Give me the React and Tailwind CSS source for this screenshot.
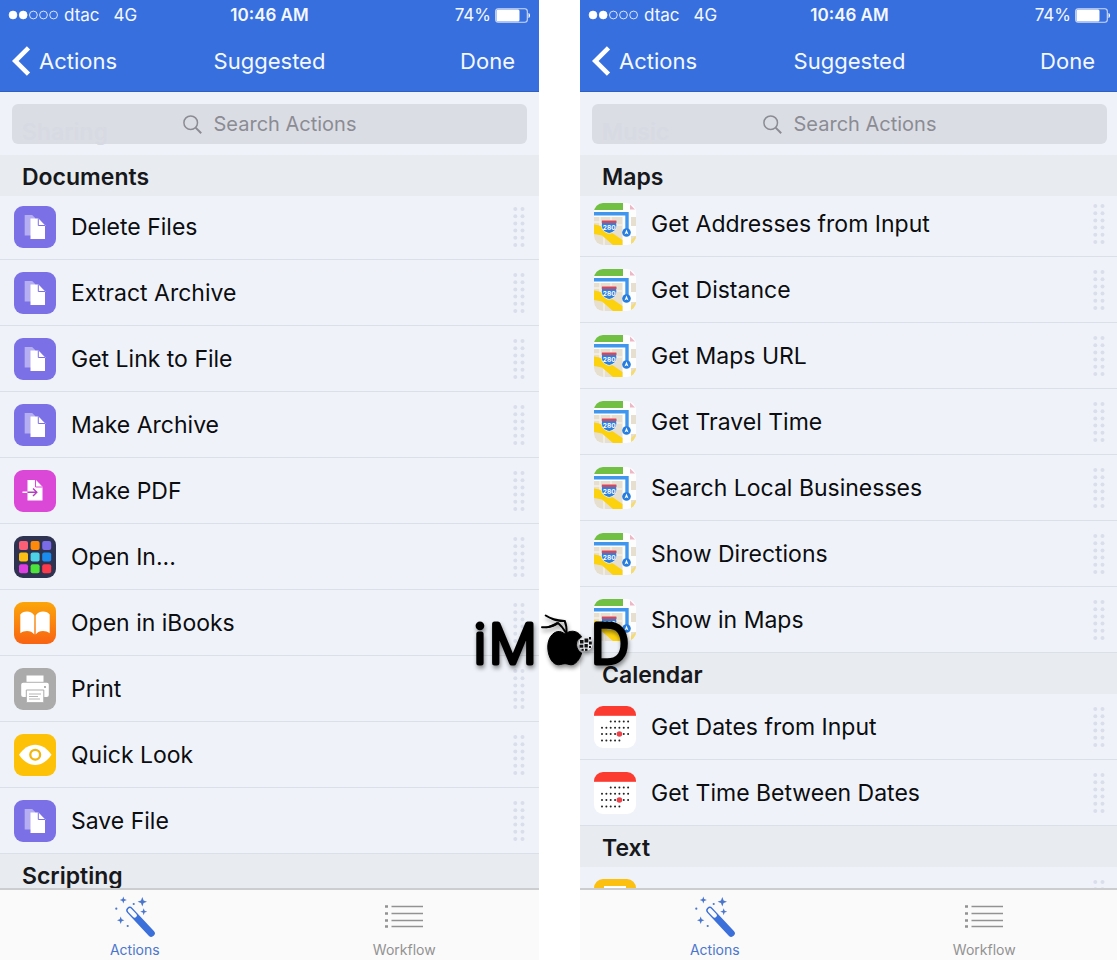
import React from "react";

const CALENDAR_DOTS = [
  { y: 15.5, cols: [2, 3, 4, 5, 6] },
  { y: 21.8, cols: [0, 1, 2, 3, 4, 5, 6] },
  { y: 28, cols: [0, 1, 2, 3, 5, 6] },
  { y: 34.5, cols: [0, 1, 2, 3, 4] },
];

const APP_COLORS = [
  "#fb5f76", "#fd8a0b", "#7a6be6",
  "#fdbf14", "#4cd3e6", "#1a8cf0",
  "#dc3fe0", "#4be23a", "#fb3a4b",
];

const FilesIcon = () => (
  <svg viewBox="0 0 42 42" className="h-full w-full">
    <rect width="42" height="42" fill="#7b70e6" />
    <path d="M10.7 9h7.5l3 3v17.5H10.7z" fill="#b5aef2" />
    <path d="M16.5 12.5h8l6.5 6.7V33H16.5z" fill="#fff" />
    <path d="M24.3 12.5v7H31" fill="none" stroke="#7b70e6" strokeWidth="1" />
  </svg>
);

const PdfIcon = () => (
  <svg viewBox="0 0 42 42" className="h-full w-full">
    <rect width="42" height="42" fill="#db48d8" />
    <path d="M13.5 10h8.5l6.5 6.7v13.8h-15z" fill="#fff" />
    <path d="M21.5 10v7h7" fill="none" stroke="#db48d8" strokeWidth="1" />
    <path d="M8.5 22.3h5" stroke="#fff" strokeWidth="1.4" />
    <path d="M13.5 22.3h9M19 18.6l3.8 3.7L19 26" fill="none" stroke="#b23fc0" strokeWidth="1.4" />
  </svg>
);

const OpenInIcon = () => (
  <svg viewBox="0 0 42 42" className="h-full w-full">
    <rect width="42" height="42" fill="#2f3352" />
    {APP_COLORS.map((color, i) => (
      <rect
        key={color}
        x={5 + (i % 3) * 11.6}
        y={5 + Math.floor(i / 3) * 11.6}
        width="9"
        height="9"
        rx="2"
        fill={color}
      />
    ))}
  </svg>
);

const BooksIcon = () => (
  <svg viewBox="0 0 42 42" className="h-full w-full">
    <defs>
      <linearGradient id="books" x1="0" y1="0" x2="0" y2="1">
        <stop offset="0" stopColor="#fba60a" />
        <stop offset="1" stopColor="#f96312" />
      </linearGradient>
    </defs>
    <rect width="42" height="42" fill="url(#books)" />
    <path d="M20.3 13.5C18.8 10.6 16 9.5 13 9.5S7.6 10.6 6.3 12.6v18.6c2-1.5 4.2-2.2 6.7-2.2 3 0 5.6 1 7.3 3.5z" fill="#fff" />
    <path d="M21.7 13.5c1.5-2.9 4.3-4 7.3-4s5.4 1.1 6.7 3.1v18.6c-2-1.5-4.2-2.2-6.7-2.2-3 0-5.6 1-7.3 3.5z" fill="#fff" />
  </svg>
);

const PrintIcon = () => (
  <svg viewBox="0 0 42 42" className="h-full w-full">
    <rect width="42" height="42" fill="#ababab" />
    <rect x="12.5" y="7.5" width="17" height="6.3" fill="#fff" />
    <rect x="7.2" y="14.8" width="27.6" height="14.2" rx="2" fill="#fff" />
    <circle cx="31" cy="19" r="0.9" fill="#8d8d8d" />
    <path d="M12.3 22h17.5v12.7H12.3z" fill="#fff" stroke="#ababab" strokeWidth="1" />
    <path d="M15 26h12M15 28.5h9M15 31h11" stroke="#ababab" strokeWidth="0.9" />
  </svg>
);

const LookIcon = () => (
  <svg viewBox="0 0 42 42" className="h-full w-full">
    <rect width="42" height="42" fill="#fdc208" />
    <path d="M5 20.8C9.5 14.2 15 10.7 21.2 10.7S33 14.2 37.5 20.8C33 27.4 27.4 31 21.2 31S9.5 27.4 5 20.8z" fill="#fff" />
    <circle cx="21.2" cy="20.8" r="4.9" fill="#fff" stroke="#f2b50c" strokeWidth="2.3" />
  </svg>
);

const MapsIcon = () => (
  <svg viewBox="0 0 42 42" className="h-full w-full">
    <rect width="42" height="42" fill="#fdfdfd" />
    <path d="M0 0h29v7H0z" fill="#71c043" />
    <path d="M0 14h28.5v28H0z" fill="#e6dfd0" />
    <path d="M6 14v10M17 14v8M0 19h8M22 22h6.5M10 32v10" stroke="#f5f1e8" strokeWidth="1.4" />
    <path d="M0 21.5c6 .5 11 3 16 7l12.5 8.5v5H19L8 32.5 0 31z" fill="#fcd20e" />
    <path d="M0 10.7h33v19" fill="none" stroke="#3f96ee" strokeWidth="3.4" />
    <path d="M36 1.5l5 5h-5z" fill="#eeb7c6" />
    <path d="M37 14h5v9h-5zM37 33h5v9h-5z" fill="#e6dfd0" />
    <path d="M37 37l5-4v5l-5 4z" fill="#f6dc70" />
    <path d="M7.5 17.5h15.2v3.5c.6 5-2 8-7.5 9.5C9.700 29 7 26 7.500 21z" fill="#2f7fdc" stroke="#fff" strokeWidth="0.7" />
    <path d="M7.800 17.600h14.600v2.400H7.800z" fill="#dd4550" />
    <text x="15.2" y="26.500" textAnchor="middle" fontSize="6.5" fontWeight="700" fill="#fff" className="font-['Inter',sans-serif]">
      280
    </text>
    <circle cx="32.5" cy="29.5" r="4.3" fill="#267de0" />
    <path d="M32.5 26.5l2 5-2-1.2-2 1.2z" fill="#fff" />
  </svg>
);

const CalendarIcon = () => (
  <svg viewBox="0 0 42 42" className="h-full w-full">
    <rect width="42" height="42" fill="#fff" />
    <rect width="42" height="9.8" fill="#fb3b30" />
    {CALENDAR_DOTS.map((row) =>
      row.cols.map((col) => (
        <circle key={`${row.y}-${col}`} cx={8 + col * 4.35} cy={row.y} r="1" fill="#222" />
      ))
    )}
    <circle cx="25.4" cy="28" r="2.8" fill="#e8434a" />
  </svg>
);

const TextIcon = () => (
  <svg viewBox="0 0 42 42" className="h-full w-full">
    <rect width="42" height="42" fill="#fcc011" />
    <path d="M10 8.5h22M10 15h22M10 21.5h22M10 28h14" stroke="#fff" strokeWidth="3" />
  </svg>
);

const WandIcon = () => (
  <svg viewBox="0 0 42 42" className="h-[42px] w-[42px]" fill="#4a76cc">
    <path d="M15.8 14.3l21.5 23" stroke="#3b6fd9" strokeWidth="7" strokeLinecap="round" />
    <path d="M15.9 14.4l4.8 5.1" stroke="#fafafa" strokeWidth="4.4" strokeLinecap="round" />
    <path d="M9.3.5l.9 2.600 2.600.9-2.600.9-.9 2.600-.9-2.600L5.800 4l2.600-.9z" />
    <path d="M28.3 1l1.300 3.400 3.400 1.300-3.400 1.300-1.300 3.400-1.300-3.400-3.400-1.300 3.400-1.300z" />
    <path d="M29.7 12.200l.9 2.600 2.600.9-2.600.9-.9 2.600-.9-2.600-2.600-.9 2.600-.9z" />
    <path d="M6.700 20.600l1 2.700 2.700 1-2.700 1-1 2.700-1-2.700-2.700-1 2.700-1z" />
    <circle cx="19.7" cy="8" r="1.1" />
    <circle cx="2.3" cy="12.7" r="1.1" />
    <circle cx="13.7" cy="30" r="1.1" />
  </svg>
);

const WorkflowIcon = () => (
  <svg viewBox="0 0 42 42" className="h-[42px] w-[42px]" fill="none" stroke="#929292">
    <path d="M8.5 10.5H40M8.5 17.5H40M8.5 24.5H40M8.5 30.5H40" strokeWidth="1.5" />
    <path d="M2 10.5h3M2 17.5h3M2 24.5h3M2 30.5h3" strokeWidth="2.6" />
  </svg>
);

const ICONS = {
  files: FilesIcon,
  pdf: PdfIcon,
  openIn: OpenInIcon,
  books: BooksIcon,
  print: PrintIcon,
  look: LookIcon,
  maps: MapsIcon,
  calendar: CalendarIcon,
  text: TextIcon,
};

const LEFT_SECTIONS = [
  {
    title: "Documents",
    offset: "-mt-[2px]",
    items: [
      { name: "Delete Files", icon: "files" },
      { name: "Extract Archive", icon: "files" },
      { name: "Get Link to File", icon: "files" },
      { name: "Make Archive", icon: "files" },
      { name: "Make PDF", icon: "pdf" },
      { name: "Open In...", icon: "openIn" },
      { name: "Open in iBooks", icon: "books" },
      { name: "Print", icon: "print" },
      { name: "Quick Look", icon: "look" },
      { name: "Save File", icon: "files" },
    ],
  },
  { title: "Scripting", items: [] },
];

const RIGHT_SECTIONS = [
  {
    title: "Maps",
    offset: "-mt-[5px]",
    items: [
      { name: "Get Addresses from Input", icon: "maps" },
      { name: "Get Distance", icon: "maps" },
      { name: "Get Maps URL", icon: "maps" },
      { name: "Get Travel Time", icon: "maps" },
      { name: "Search Local Businesses", icon: "maps" },
      { name: "Show Directions", icon: "maps" },
      { name: "Show in Maps", icon: "maps" },
    ],
  },
  {
    title: "Calendar",
    items: [
      { name: "Get Dates from Input", icon: "calendar" },
      { name: "Get Time Between Dates", icon: "calendar" },
    ],
  },
  { title: "Text", items: [{ name: "", icon: "text" }] },
];

const StatusBar = () => (
  <div className="grid h-[30px] grid-cols-[1fr_auto_1fr] items-center px-2 text-[17px] leading-5">
    <div className="flex items-center">
      <svg viewBox="0 0 52 10" className="h-[10px] w-[52px]" stroke="#fff" strokeWidth="0.8">
        <circle cx="5" cy="5" r="3.9" fill="#fff" />
        <circle cx="15.2" cy="5" r="3.9" fill="#fff" />
        <circle cx="25.4" cy="5" r="3.9" fill="none" />
        <circle cx="35.5" cy="5" r="3.9" fill="none" />
        <circle cx="45.6" cy="5" r="3.9" fill="none" />
      </svg>
      <span className="ml-1">dtac</span>
      <span className="ml-[14px]">4G</span>
    </div>
    <span className="font-semibold">10:46 AM</span>
    <div className="flex items-center justify-end gap-1">
      <span>74%</span>
      <svg viewBox="0 0 36 15" className="h-[15px] w-[36px]">
        <rect x="0.7" y="0.7" width="31.6" height="13.6" rx="2.5" fill="none" stroke="#cfdcf7" strokeWidth="1.1" />
        <rect x="1.5" y="1.5" width="23" height="12" rx="1.5" fill="#fff" />
        <path d="M33.5 5c2 .5 2 4.5 0 5z" fill="#fff" />
      </svg>
    </div>
  </div>
);

const DragHandle = () => (
  <svg viewBox="0 0 12 40" className="h-[40px] w-[12px] shrink-0" fill="#dadeea">
    {[2, 9.2, 16.4, 23.6, 30.8, 38].map((y) => (
      <React.Fragment key={y}>
        <circle cx="2.3" cy={y} r="2" />
        <circle cx="9.5" cy={y} r="2" />
      </React.Fragment>
    ))}
  </svg>
);

const ActionRow = ({ name, icon }) => {
  const Icon = ICONS[icon];
  return (
    <li className="flex h-[66px] items-center border-b border-[#dbdfe7] px-[14px]">
      <span className="h-[42px] w-[42px] shrink-0 overflow-hidden rounded-[9px]">
        <Icon />
      </span>
      <span className="ml-[15px] flex-1 truncate text-[23px] leading-8 text-[#0c0d10]">{name}</span>
      <DragHandle />
    </li>
  );
};

const Section = ({ title, offset, items }) => (
  <section>
    <h2 className="relative z-10 flex h-[41px] items-center bg-[#e8ebef] px-[22px] pt-[2px] text-[23px] leading-8 font-semibold text-[#17181b]">
      {title}
    </h2>
    <ul className={offset}>
      {items.map((item, i) => (
        <ActionRow key={i} {...item} />
      ))}
    </ul>
  </section>
);

const Phone = ({ id, ghost, sections }) => (
  <div className="flex h-screen min-w-0 flex-col overflow-hidden bg-[#eff3f9]">
    <header className="h-[92px] shrink-0 border-b border-[#2f5fc0] bg-[#386fde] text-[#f4f8ff]">
      <StatusBar />
      <nav className="grid h-[61px] grid-cols-[1fr_auto_1fr] items-center px-6 text-[22px] leading-8">
        <button className="-ml-3 flex items-center gap-2 justify-self-start">
          <svg viewBox="0 0 19 30" className="h-[30px] w-[19px]" fill="none" stroke="#fff" strokeWidth="4.6">
            <path d="M16.5 1.8L3.2 15l13.300 13.200" />
          </svg>
          Actions
        </button>
        <h1>Suggested</h1>
        <button className="justify-self-end">Done</button>
      </nav>
    </header>

    <div className="h-[63px] shrink-0 px-3 pt-3">
      <div className="relative flex h-[40px] items-center justify-center gap-3 rounded-md bg-[#dbdde5]">
        <span className="absolute left-[10px] top-3 text-[23px] leading-8 font-semibold text-[#d7dae2]">{ghost}</span>
        <label htmlFor={id} aria-label="Search Actions">
          <svg viewBox="0 0 19 19" className="h-[19px] w-[19px]" fill="none" stroke="#8b8c93">
            <circle cx="7.7" cy="7.7" r="6.8" strokeWidth="1.5" />
            <path d="M12.6 12.6l5.6 5.6" strokeWidth="2" />
          </svg>
        </label>
        <input
          id={id}
          type="text"
          placeholder="Search Actions"
          className="relative field-sizing-content bg-transparent text-[20px] leading-8 outline-none placeholder:text-[#8b8c93]"
        />
      </div>
    </div>

    <main className="min-h-0 flex-1 overflow-hidden">
      {sections.map((section) => (
        <Section key={section.title} {...section} />
      ))}
    </main>

    <footer className="grid h-[72px] shrink-0 grid-cols-2 border-t-2 border-[#cbcdce] bg-[#fafafa] text-[14px] leading-5">
      <button className="flex flex-col items-center pt-[6px] text-[#4a76cc]">
        <WandIcon />
        <span className="mt-[2px]">Actions</span>
      </button>
      <button className="flex flex-col items-center pt-[6px] text-[#929292]">
        <WorkflowIcon />
        <span className="mt-[2px]">Workflow</span>
      </button>
    </footer>
  </div>
);

const Logo = () => (
  <svg
    viewBox="0 0 164 64"
    className="absolute left-[474px] top-[612px] z-20 h-[64px] w-[164px] drop-shadow-[1px_3px_2px_rgba(0,0,0,0.45)]"
  >
    <g className="font-['Inter',sans-serif]" fontSize="53" fontWeight="200" stroke="#000" strokeWidth="5" strokeLinejoin="round">
      <text x="0" y="51">i</text>
      <text x="15" y="51">M</text>
      <text x="117" y="51">D</text>
    </g>
    <path
      d="M91 22c3-2.5 7-3.5 10.5-2.3 3 1 5 3 6 5.300-4 2-5.500 5-5 8.500.4 3.500 2.400 6 5.200 7.500-1.500 5-4.700 10-8.700 11.500-3 1-5-.8-8-.8s-5.500 1.700-8.500.8C77 51 73.500 42 73.800 34c.3-8 4.700-13.500 10-14.500 2.700-.4 5 1 7.200 2.500z"
      fill="#000"
      stroke="#000"
      strokeWidth="1"
    />
    <path d="M92.5 21c.2-4-.2-8.500-1.800-12-5.500-.5-12-1-19-5.500" fill="none" stroke="#000" strokeWidth="2" strokeLinecap="round" />
    <path d="M91.5 20c-2-3.5-4.500-6.500-7.500-9-4 2.500-9 5-16 4.200" fill="none" stroke="#000" strokeWidth="2" strokeLinecap="round" />
    <path d="M71 2.500c4 3.500 10 6 18 5.500l2 2c-8 .5-15-2-20-7.500zM68 15.500c6-.5 11-3.500 15-5.500l2 1.500c-4 3-10 6-17 4z" fill="#000" />
    <circle cx="111.500" cy="32" r="7" fill="#e6e8ec" />
    <g fill="#111">
      <rect x="106" y="28" width="3.500" height="3.500" />
      <rect x="110.500" y="26.500" width="3.800" height="4" />
      <rect x="115" y="25" width="2" height="2.500" />
      <rect x="115" y="29.500" width="2.800" height="3" />
      <rect x="105.500" y="32.700" width="3.800" height="3" />
      <rect x="110.500" y="32" width="3.300" height="3.500" />
      <rect x="115" y="34" width="2" height="2" />
      <rect x="107.500" y="36.800" width="2.200" height="2" />
      <rect x="111" y="36.700" width="2.500" height="2.200" />
    </g>
  </svg>
);

const App = () => (
  <div className="relative min-h-screen overflow-hidden bg-white font-['Inter',sans-serif]">
    <div className="-mr-[2px] grid grid-cols-2 gap-x-[41px]">
      <Phone id="search-left" ghost="Sharing" sections={LEFT_SECTIONS} />
      <Phone id="search-right" ghost="Music" sections={RIGHT_SECTIONS} />
    </div>
    <Logo />
  </div>
);

export default App;
